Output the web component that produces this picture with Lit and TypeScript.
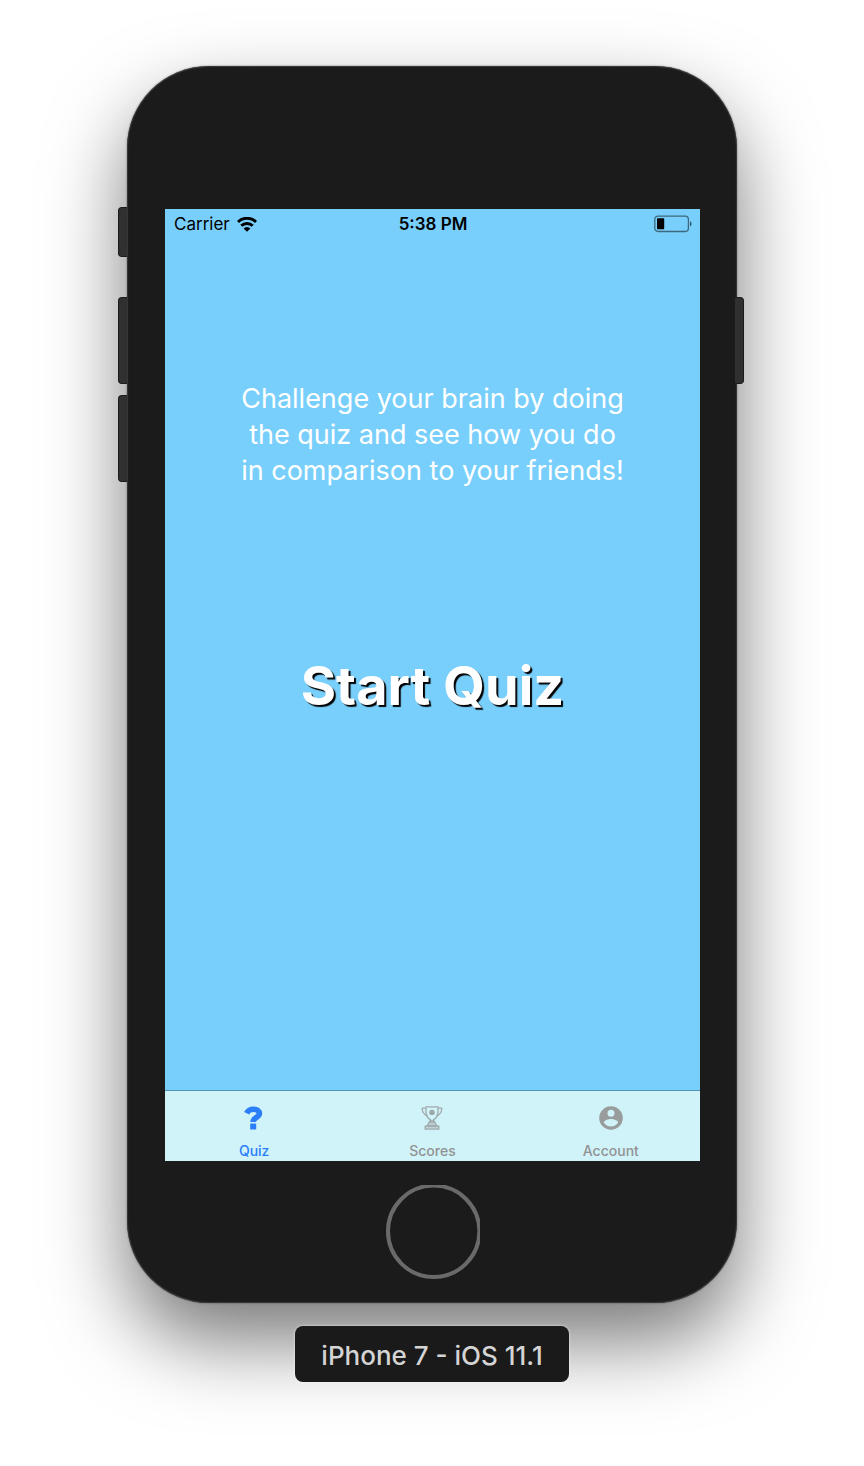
import { LitElement, html, css, svg } from "lit";
import { customElement, state } from "lit/decorators.js";
import { classMap } from "lit/directives/class-map.js";

const quizIcon = svg`
  <path d="M4.600 7.200C6 4.200 8.200 3.200 11.400 3.200c3.900 0 6 1.700 6 4.300 0 4-6.300 3.700-6.300 8.500" fill="none" stroke="currentColor" stroke-width="5.600"/>
  <rect x="8.200" y="17.400" width="6" height="6.200" rx="0.500" fill="currentColor"/>`;

const trophyIcon = svg`
  <g fill="none" stroke="currentColor" stroke-width="1.300" stroke-linejoin="round" opacity="0.750">
    <path d="M6 .8h12v4.600c0 4-2 7.200-4.600 8.400v2.400h-2.800v-2.400C8 12.600 6 9.400 6 5.400z"/>
    <path d="M6 2.200H2.200c0 3.600 1.600 6.400 5.400 7.600M18 2.200h3.800c0 3.600-1.600 6.400-5.400 7.600"/>
    <path d="M10 14.800h4l3 5.200H7z" fill="currentColor" fill-opacity="0.500"/>
    <path d="M5.200 20.200h13.600v3H5.200z" fill="currentColor" fill-opacity="0.400"/>
  </g>
  <circle cx="12" cy="6.400" r="2.700" fill="currentColor" opacity="0.800"/>`;

const accountIcon = svg`
  <path fill="currentColor" fill-rule="evenodd" opacity="0.900" d="M12 .2a11.800 11.800 0 1 0 0 23.600A11.800 11.800 0 0 0 12 .2zm0 3.500a3.500 3.500 0 1 1 0 7 3.500 3.500 0 0 1 0-7zm0 16.800c-3 0-5.500-1.500-7.100-3.800 0-2.300 4.700-3.600 7.100-3.600s7.100 1.300 7.100 3.600c-1.600 2.300-4.100 3.800-7.100 3.800z"/>`;

const tabs = [
  { id: "quiz", label: "Quiz", icon: quizIcon },
  { id: "scores", label: "Scores", icon: trophyIcon },
  { id: "account", label: "Account", icon: accountIcon },
];

@customElement("status-bar")
export class StatusBar extends LitElement {
  static styles = css`
    :host {
      display: grid;
      grid-template-columns: 1fr auto 1fr;
      align-items: center;
      height: 30px;
      padding: 0 8px 0 9px;
      color: #000;
      font-size: 17px;
    }
    .carrier {
      display: flex;
      align-items: center;
      gap: 7px;
    }
    .time {
      font-weight: 600;
    }
    .battery {
      justify-self: end;
    }
    svg {
      display: block;
    }
  `;

  render() {
    return html`
      <div class="carrier">
        <span>Carrier</span>
        <svg width="20" height="15" viewBox="0 0 20 15" aria-hidden="true">
          <g fill="none" stroke="#000" stroke-width="3">
            <path d="M1 5a12.700 12.700 0 0 1 18 0"/>
            <path d="M4.300 8.800a8 8 0 0 1 11.400 0"/>
          </g>
          <path d="M10 14.800 6.600 11.400a4.600 4.600 0 0 1 6.800 0z"/>
        </svg>
      </div>
      <time class="time">5:38 PM</time>
      <svg class="battery" width="38" height="18" viewBox="0 0 38 18" role="img" aria-label="Battery low">
        <rect x="0.800" y="1.100" width="33.600" height="15.400" rx="3.200" fill="none" stroke="#000" stroke-opacity="0.500" stroke-width="1.300"/>
        <rect x="3" y="3.300" width="7.200" height="11" rx="0.800"/>
        <path d="M36 6.200c2 1 2 4.200 0 5.200z" fill-opacity="0.600"/>
      </svg>
    `;
  }
}

@customElement("app-root")
export class AppRoot extends LitElement {
  @state() private active = "quiz";

  static styles = css`
    :host {
      box-sizing: border-box;
      display: flex;
      flex-direction: column;
      align-items: center;
      gap: 23px;
      min-height: 100vh;
      padding: 66px 24px 84px;
      overflow: hidden;
      background: #fff;
      font-family: Inter, "Liberation Sans", sans-serif;
    }
    button {
      margin: 0;
      padding: 0;
      border: 0;
      background: none;
      font: inherit;
      color: inherit;
      cursor: pointer;
    }
    svg {
      display: block;
    }
    .phone {
      position: relative;
      box-sizing: border-box;
      display: flex;
      flex-direction: column;
      align-items: center;
      gap: 24px;
      width: 100%;
      max-width: 610px;
      padding: 143px 37px 24px 38px;
      border-radius: 82px;
      background: #1b1b1b;
      box-shadow:
        inset 0 0 1px 1px rgba(90, 90, 90, 0.5),
        0 0 2px rgba(0, 0, 0, 0.5),
        0 38px 80px rgba(0, 0, 0, 0.53);
    }
    .side {
      position: absolute;
      box-sizing: border-box;
      width: 9px;
      height: 87px;
      border: 1px solid #1c1c1c;
      background: #303030;
    }
    .left {
      right: 100%;
      border-right: 0;
      border-radius: 4px 0 0 4px;
    }
    .right {
      left: calc(100% - 2px);
      border-left: 0;
      border-radius: 0 4px 4px 0;
    }
    .mute {
      top: 141px;
      height: 50px;
    }
    .upper {
      top: 231px;
    }
    .lower {
      top: 329px;
    }
    .screen {
      display: flex;
      flex-direction: column;
      width: 100%;
      aspect-ratio: 535 / 952;
      background: #79cffb;
    }
    .content {
      flex: 1;
      display: flex;
      flex-direction: column;
      align-items: center;
      gap: 163px;
      padding: 142px 16px 0;
      color: #fff;
      text-align: center;
    }
    .intro {
      margin: 0;
      font-size: 27px;
      line-height: 36px;
    }
    .start {
      font-size: 54px;
      line-height: 68px;
      font-weight: 700;
      text-shadow: 2px 2px 1px #000;
    }
    .tabs {
      display: grid;
      grid-template-columns: repeat(3, 1fr);
      border-top: 1px solid #5095b8;
      background: #cff3f9;
    }
    .tab {
      display: flex;
      flex-direction: column;
      align-items: center;
      gap: 12px;
      padding: 15px 0 1px;
      color: #929292;
      font-size: 14px;
      line-height: 18px;
      font-weight: 500;
    }
    .selected {
      color: #2c7ef8;
    }
    .label {
      position: relative;
      z-index: 1;
      margin: 0;
      padding: 14px 26px 10px;
      border-radius: 8px;
      background: #1a1a1a;
      box-shadow: 0 0 2px 1px rgba(255, 255, 255, 0.35);
      color: #d4d4d4;
      font-size: 26px;
      line-height: 32px;
      font-weight: 500;
    }
  `;

  render() {
    return html`
      <main class="phone">
        <span class="side left mute"></span>
        <span class="side left upper"></span>
        <span class="side left lower"></span>
        <span class="side right upper"></span>
        <section class="screen">
          <status-bar></status-bar>
          <div class="content">
            <p class="intro">
              Challenge your brain by doing<br />the quiz and see how you do<br />in comparison to your friends!
            </p>
            <button class="start">Start Quiz</button>
          </div>
          <nav class="tabs">
            ${tabs.map(
              (tab) => html`
                <button
                  class=${classMap({ tab: true, selected: tab.id === this.active })}
                  @click=${() => (this.active = tab.id)}
                >
                  <svg width="24" height="24" viewBox="0 0 24 24" aria-hidden="true">${tab.icon}</svg>
                  <span>${tab.label}</span>
                </button>
              `
            )}
          </nav>
        </section>
        <button class="home" aria-label="Home">
          <svg width="94" height="94" viewBox="0 0 94 94">
            <circle cx="47.700" cy="46.300" r="45.700" fill="none" stroke="#6a6a6a" stroke-width="4"/>
          </svg>
        </button>
      </main>
      <p class="label">iPhone 7 - iOS 11.1</p>
    `;
  }
}
